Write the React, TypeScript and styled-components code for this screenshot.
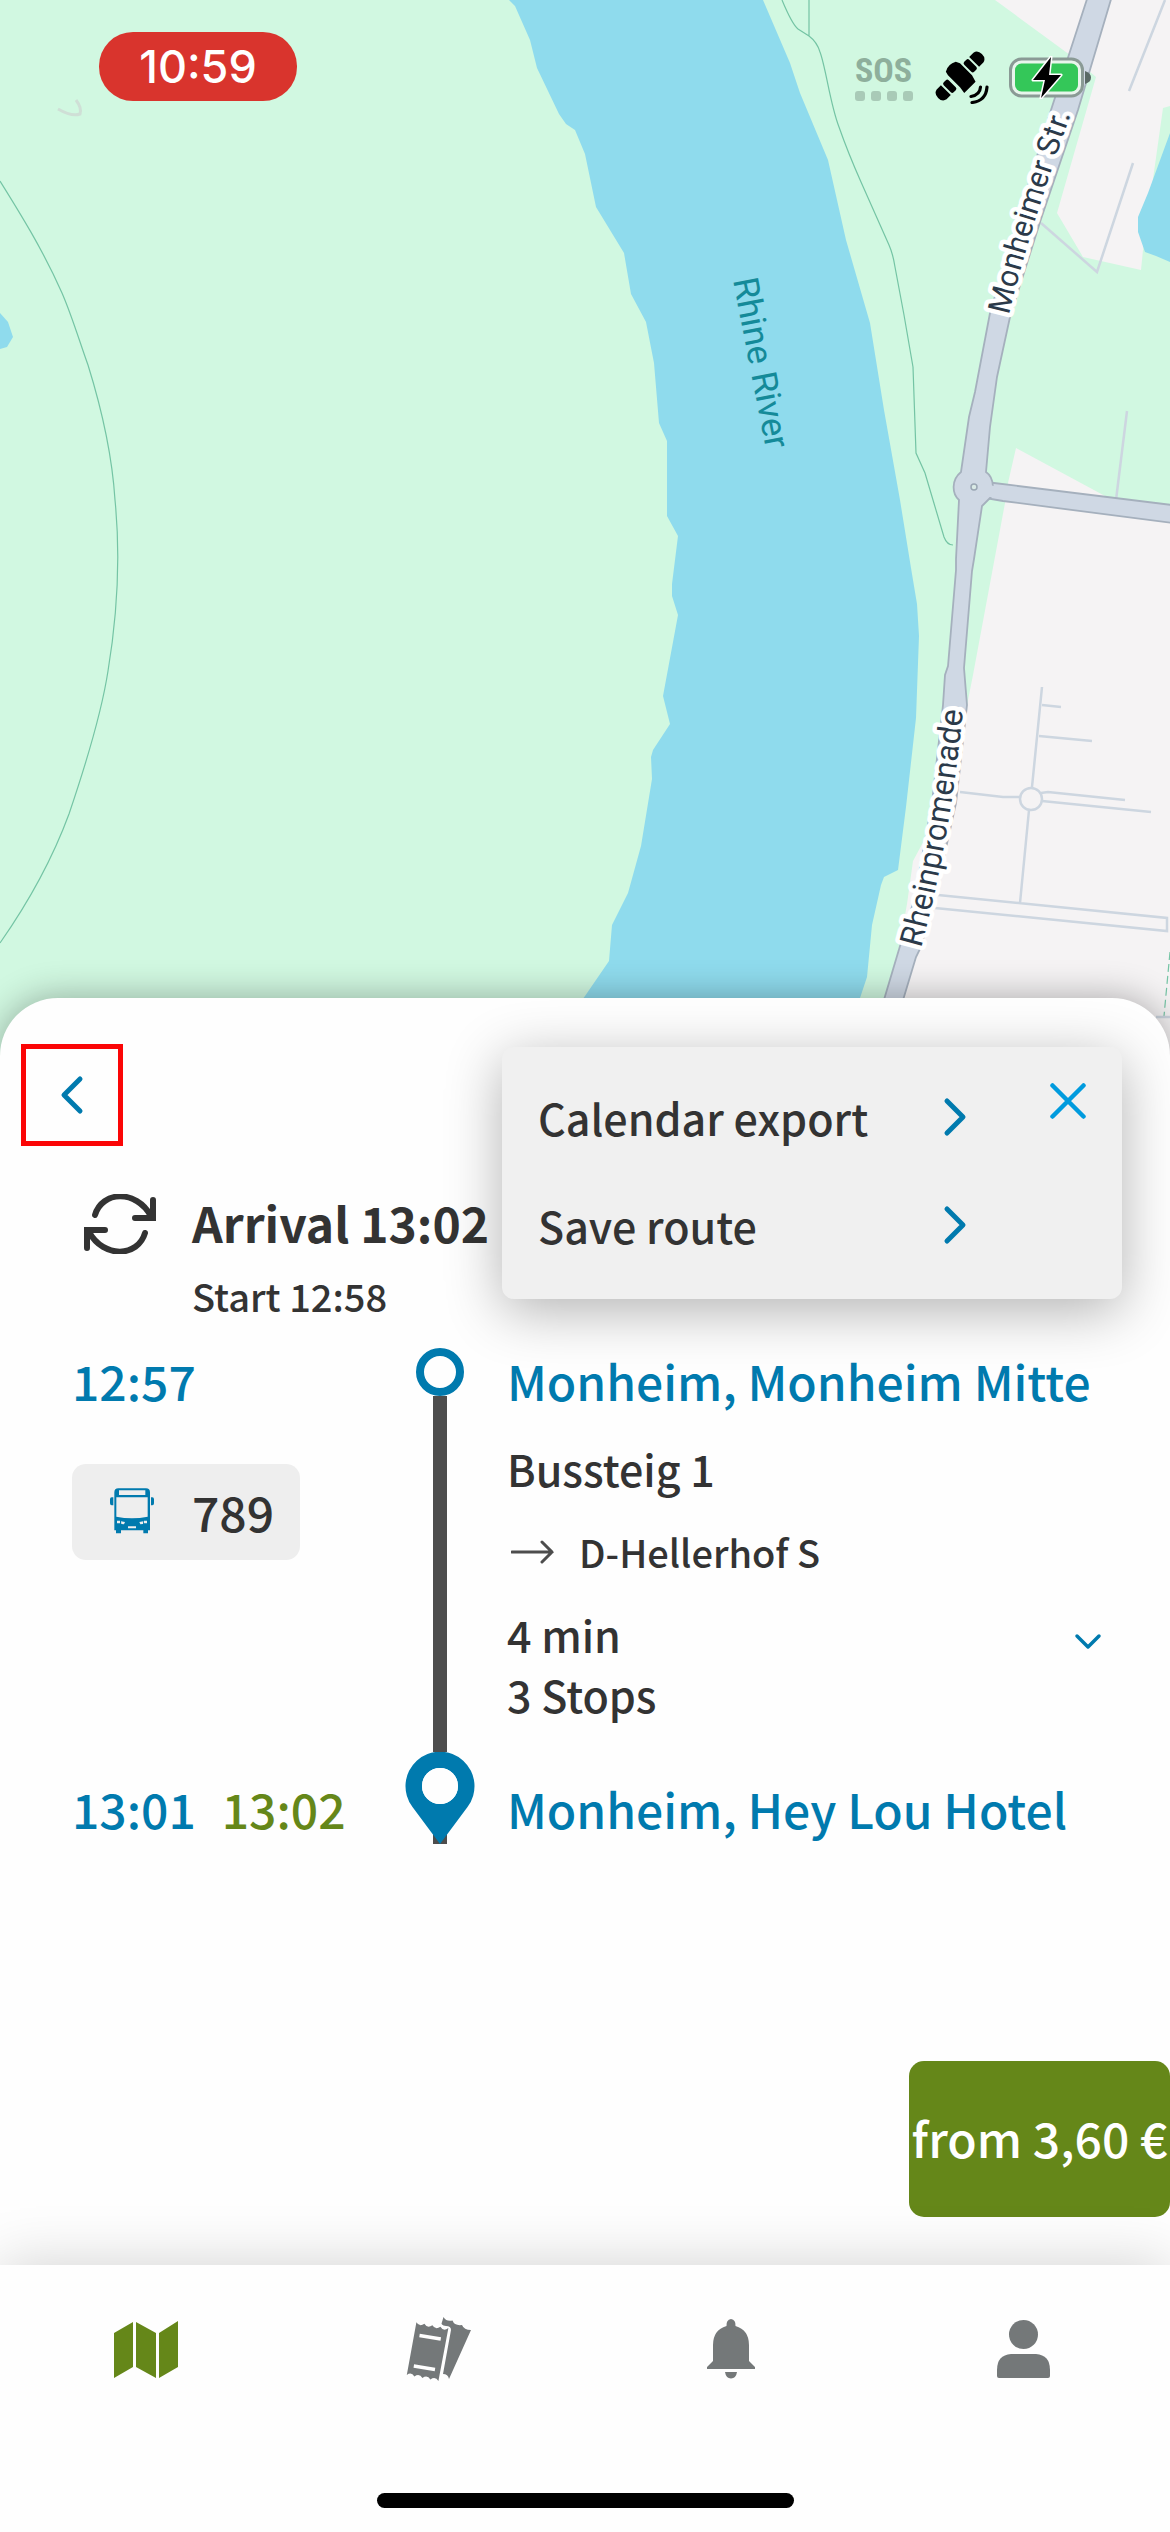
import React from 'react';
import styled, { createGlobalStyle } from 'styled-components';

const colors = {
  ink: '#333333',
  blue: '#007aae',
  sky: '#009bde',
  green: '#658719',
  grey: '#747879',
  panel: '#f0f0f0',
};

const GlobalStyle = createGlobalStyle`
  *, *::before, *::after { box-sizing: border-box; }
  body { margin: 0; background: #fefefe; }
  button { font: inherit; color: inherit; border: 0; padding: 0; background: none; cursor: pointer; }
  p, h1, h2 { margin: 0; font-weight: inherit; }
  svg { display: block; flex: none; }
`;

const Page = styled.div`
  min-height: 100vh;
  display: flex;
  flex-direction: column;
  color: ${colors.ink};
  font-family: 'Noto Sans CJK JP', 'Noto Sans', sans-serif;
  font-weight: 500;
  overflow-x: hidden;
`;

/* ---------- map ---------- */

const MapArea = styled.header`
  position: relative;
  flex: 1 0 700px;
  background: #d1f8e1;
`;

const MapCanvas = styled.svg`
  position: absolute;
  inset: 0;
  width: 100%;
  height: 100%;
`;

const MapLabel = styled.text`
  font-family: Roboto, 'Liberation Sans', sans-serif;
  font-size: ${(p: { $size: number }) => p.$size}px;
  font-weight: 400;
`;

const RoadLabel = styled(MapLabel)`
  fill: #2b3a4a;
  stroke: #ffffff;
  stroke-width: 9px;
  stroke-linejoin: round;
  paint-order: stroke;
`;

const StatusBar = styled.div`
  position: relative;
  display: flex;
  justify-content: space-between;
  align-items: flex-start;
  padding: 32px 79px 0 99px;
`;

const Clock = styled.time`
  display: flex;
  align-items: center;
  justify-content: center;
  width: 198px;
  height: 69px;
  border-radius: 34px;
  background: #d9342d;
  color: #ffffff;
  font-family: Inter, Roboto, sans-serif;
  font-size: 45px;
  font-weight: 500;
`;

const StatusIcons = styled.div`
  display: flex;
  align-items: center;
  gap: 20px;
  padding-top: 18px;
`;

const Sos = styled.div`
  display: flex;
  flex-direction: column;
  align-items: center;
  gap: 4px;
  width: 61px;
  color: #8eaf9c;
  font-family: 'Roboto Condensed', Roboto, sans-serif;
  font-size: 34px;
  line-height: 34px;
  font-weight: 700;
`;

const SosDots = styled.div`
  display: flex;
  gap: 6px;
`;

const SosDot = styled.i`
  width: 10px;
  height: 10px;
  border-radius: 3px;
  background: #a9cab7;
`;

/* ---------- sheet ---------- */

const Sheet = styled.main`
  position: relative;
  display: flex;
  flex-direction: column;
  margin-top: -62px;
  padding: 46px 0 48px;
  border-radius: 58px 58px 0 0;
  background: #fefefe;
  box-shadow: 0 0 36px rgba(0, 0, 0, 0.32);
`;

const BackButton = styled.button`
  display: flex;
  align-items: center;
  justify-content: center;
  width: 102px;
  height: 102px;
  margin-left: 21px;
  && { border: 5px solid #fb0506; }
`;

const Menu = styled.div`
  position: absolute;
  top: 49px;
  right: 48px;
  display: flex;
  align-items: flex-start;
  justify-content: space-between;
  width: 620px;
  padding: 16px 36px 20px;
  border-radius: 12px;
  background: ${colors.panel};
  box-shadow: 0 12px 56px rgba(0, 0, 0, 0.3);
`;

const MenuItems = styled.div`
  display: flex;
  flex-direction: column;
  width: 430px;
`;

const MenuItem = styled.button`
  display: flex;
  align-items: center;
  justify-content: space-between;
  height: 108px;
  font-size: 43px;
  line-height: 64px;
  text-align: left;
`;

const CloseButton = styled.button`
  && { padding-top: 20px; }
`;

const Summary = styled.section`
  display: flex;
  gap: 36px;
  padding: 40px 72px 0 84px;
  svg { margin-top: 8px; }
`;

const Arrival = styled.h1`
  font-size: 48px;
  line-height: 72px;
  font-weight: 700;
`;

const Start = styled.p`
  padding-top: 8px;
  font-size: 38px;
  line-height: 60px;
`;

const Timeline = styled.section`
  display: grid;
  grid-template-columns: 301px 70px 1fr;
  column-gap: 32px;
  padding: 22px 68px 0 72px;
`;

const Times = styled.div`
  display: flex;
  flex-direction: column;
  justify-content: space-between;
  padding-bottom: 4px;
`;

const TimeRow = styled.p`
  display: flex;
  gap: 26px;
  color: ${colors.blue};
  font-size: 48px;
  line-height: 64px;
`;

const LiveTime = styled.span`
  color: ${colors.green};
`;

const LineBadge = styled.div`
  display: flex;
  align-items: center;
  justify-content: space-between;
  width: 228px;
  height: 96px;
  margin-top: 52px;
  padding: 0 26px 2px 38px;
  border-radius: 14px;
  background: #eeeeee;
  font-size: 48px;
  line-height: 64px;
`;

const Rail = styled.div`
  display: flex;
  flex-direction: column;
  align-items: center;
`;

const RailStart = styled.i`
  width: 48px;
  height: 48px;
  border: 8px solid ${colors.blue};
  border-radius: 50%;
`;

const RailLine = styled.i`
  flex: 1;
  width: 14px;
  background: #4d4d4d;
`;

const Details = styled.div`
  display: flex;
  flex-direction: column;
  padding-bottom: 4px;
`;

const StopName = styled.h2`
  color: ${colors.blue};
  font-size: 48px;
  line-height: 64px;
  white-space: nowrap;
`;

const Platform = styled.p`
  margin-top: 24px;
  font-size: 43px;
  line-height: 64px;
`;

const Direction = styled.p`
  display: flex;
  align-items: center;
  gap: 24px;
  margin-top: 24px;
  padding-left: 4px;
  font-size: 38px;
  line-height: 56px;
`;

const StopsToggle = styled.button`
  display: flex;
  align-items: flex-start;
  justify-content: space-between;
  && { margin: 24px 0 52px; }
  font-size: 43px;
  line-height: 60px;
  text-align: left;
  svg { margin-top: 28px; }
`;

const StopsText = styled.span`
  display: flex;
  flex-direction: column;
`;

const PriceButton = styled.button`
  align-self: flex-end;
  min-width: 261px;
  height: 156px;
  margin-top: 217px;
  border-radius: 15px;
  && { padding-bottom: 4px; background: ${colors.green}; color: #ffffff; }
  font-size: 48px;
  line-height: 64px;
  white-space: nowrap;
`;

/* ---------- bottom navigation ---------- */

const BottomBar = styled.footer`
  position: relative;
  display: flex;
  flex-direction: column;
  align-items: center;
  padding: 36px 0 24px;
  background: #fefefe;
  box-shadow: 0 0 56px rgba(0, 0, 0, 0.18);
`;

const Tabs = styled.nav`
  display: grid;
  grid-template-columns: repeat(4, 1fr);
  width: 100%;
`;

const Tab = styled.button<{ $active?: boolean }>`
  display: flex;
  align-items: center;
  justify-content: center;
  height: 96px;
  && { color: ${(p) => (p.$active ? colors.green : colors.grey)}; }
`;

const HomeIndicator = styled.div`
  width: 417px;
  height: 15px;
  margin-top: 96px;
  border-radius: 8px;
  background: #000000;
`;

/* ---------- drawings ---------- */

const CityMap = () => (
  <MapCanvas viewBox="0 0 1170 1060" preserveAspectRatio="xMidYMin slice" role="img" aria-label="Map">
    <rect width="1170" height="1060" fill="#d1f8e1" />
    <g fill="#f5f3f4">
      <path d="M995 0L1070 55L1096 77L1057 213L1083 257L1141 270L1143 250L1163 108L1170 106V0Z" />
      <path d="M1016 448L1105 496L1170 520V1060H870L900 943L907 904L913 861L935 820L950 740L967 705L973 675L1005 503L1008 483Z" />
    </g>
    <g fill="#8fdbed">
      <path d="M509 0L515 6L530 40L537 68L559 114L566 124L575 130L585 154L596 207L624 253L631 294L646 322L654 363L659 423L667 441V516L678 536L672 584V596L678 615L663 696L670 724L653 750L651 757L652 779L641 846L628 893L612 925L609 961L585 996L560 1030H850L860 998L867 977L872 925L881 885L884 877L898 870L906 807L916 718L919 636L917 604L911 568L900 500L884 410L870 323L846 240L828 160L800 93L790 63L763 0Z" />
      <path d="M0 313L8 322L13 337L7 347L0 349Z" />
      <path d="M1170 133L1148 193L1138 217V232L1145 252L1156 256L1170 262Z" />
    </g>
    <g fill="none" stroke="#74c4a4" strokeWidth="1.2">
      <path d="M0 181C20 213 43 250 62 293C72 316 80 343 88 365C102 410 112 453 115 500Q123 580 108 671C102 710 88 758 69 814C55 852 35 893 0 943" />
      <path d="M782 0Q792 24 798 29L809 36Q817 42 820 52C826 68 830 104 839 127C846 147 853 164 861 182L889 245Q893 254 895 267L904 315L913 367L916 453L925 473L933 500L944 537Q947 545 953 545M809 0V36" />
      <path d="M1170 952L1164 1016" strokeDasharray="8 4" />
    </g>
    <path d="M58 109Q72 117 80 114Q82 108 76 100" fill="none" stroke="#cfdfd6" strokeWidth="3" />
    <g fill="none" stroke="#cdd6e0" strokeWidth="2.5">
      <path d="M1165 0L1129 91M1133 163L1097 272L1041 223M1127 411L1116 500" />
      <path d="M1042 687L1032 787M1042 705L1061 707M1039 736L1092 741M960 792L1003 797H1020M1041 793L1048 792L1125 800M1042 801L1151 812M1029 810L1020 903M938 895L1167 918V931L935 908M1156 1017H1170" />
      <circle cx="1031" cy="799" r="11" />
    </g>
    <g fill="#cfd8e4" stroke="#a5b0bd" strokeWidth="1.8">
      <path d="M985 482L994 483L1180 506V524L1003 501L985 498Z" />
      <path d="M1088 -4L1051 110L1018 219L990 313L975 392L969 417L961 472C951 480 952 494 959 500L956 559V570L948 666L945 675L943 705L932 803L914 900L900 946L875 1030H894L916 957L920 949L932 911L956 803L967 705L964 668L972 571L974 559L982 506L990 498C994 494 995 478 986 472L990 427L997 377L1010 317L1041 219L1078 110L1112 -4Z" />
    </g>
    <path d="M980 484L1010 488V499L980 496Z" fill="#cfd8e4" />
    <circle cx="974" cy="487" r="3" fill="#d9e9e5" stroke="#9aa6b3" strokeWidth="1.5" />
    <path id="monheimer" d="M1009 315Q1029 229 1077 97" fill="none" />
    <path id="promenade" d="M921 948Q951 840 965 690" fill="none" />
    <MapLabel $size={35} fill="#148a99" transform="translate(733 280) rotate(79)">Rhine River</MapLabel>
    <RoadLabel $size={31}>
      <textPath href="#monheimer">Monheimer Str.</textPath>
    </RoadLabel>
    <RoadLabel $size={32}>
      <textPath href="#promenade">Rheinpromenade</textPath>
    </RoadLabel>
  </MapCanvas>
);

const SatelliteIcon = () => (
  <svg width="55" height="54" viewBox="933 50 55 54" aria-label="Satellite">
    <g transform="translate(959 76) rotate(-45)">
      <path d="M-7 -13Q0 -17 7 -13L9 -9V8L7 15H-9L-8 8V-9Z" />
      <rect x="11" y="-7" width="7" height="14" rx="2" />
      <path d="M20 -7H26Q31 -6 31 0Q31 6 26 7H20Z" />
      <rect x="-18" y="-7" width="7" height="14" rx="2" />
      <path d="M-20 -7H-26Q-31 -6 -31 0Q-31 6 -26 7H-20Z" />
    </g>
    <path d="M979.500 87Q979 95 970 96.500M986 87Q985 101 971 102.500" fill="none" stroke="#000" strokeWidth="3.200" strokeLinecap="round" />
  </svg>
);

const BatteryIcon = () => (
  <svg width="82" height="43" viewBox="0 0 82 43" aria-label="Battery charging">
    <rect x="1.500" y="3" width="72" height="37" rx="11" fill="#e8f5ec" stroke="#8a9a95" strokeWidth="3" />
    <rect x="6" y="7.500" width="63" height="28" rx="6.500" fill="#34c759" />
    <path d="M76 15Q82 17 82 21.500Q82 26 76 28Z" fill="#5a6a66" />
    <path d="M42 1L24 24H36L32 42L52 19H40Z" fill="#000" stroke="#fff" strokeWidth="3" strokeLinejoin="round" paintOrder="stroke" />
  </svg>
);

const Chevron = ({ flip, color = colors.blue }: { flip?: boolean; color?: string }) => (
  <svg width="26" height="40" viewBox="0 0 26 40" aria-hidden="true">
    <path
      d={flip ? 'M21 4L5 20L21 36' : 'M5 4L21 20L5 36'}
      fill="none"
      stroke={color}
      strokeWidth="5"
      strokeLinecap="round"
      strokeLinejoin="round"
    />
  </svg>
);

const CloseIcon = () => (
  <svg width="36" height="36" viewBox="0 0 36 36" aria-hidden="true">
    <path d="M2.500 2.500L33.500 33.500M33.500 2.500L2.500 33.500" stroke={colors.sky} strokeWidth="4.500" strokeLinecap="round" />
  </svg>
);

const RefreshIcon = () => (
  <svg width="72" height="60" viewBox="84 1195 72 60" aria-hidden="true">
    <path
      d="M95 1216C102 1192 136 1190 151 1217M153 1201V1219H135M145 1234C138 1258 104 1260 89 1233M87 1249V1231H105"
      fill="none"
      stroke={colors.ink}
      strokeWidth="6"
      strokeLinecap="round"
    />
  </svg>
);

const BusIcon = () => (
  <svg width="44" height="46" viewBox="330 266 132 138" aria-label="Bus">
    <path
      fill={colors.blue}
      fillRule="evenodd"
      d="M355 267H438Q450 267 450 279V393H444V402H430V393H363V402H348V393H343V279Q343 267 355 267ZM357 273V287H436V273ZM349 294V352Q396 362 443 352V294ZM351 364V372H360V364ZM363 366L375 368L372 375L364 374ZM432 364V372H441V364ZM430 366L418 368L421 375L429 374ZM384 381V387H408V381Z"
    />
    <path fill={colors.blue} d="M340 294V318H335Q330 318 330 312V300Q330 294 335 294ZM453 294V318H457Q462 318 462 312V300Q462 294 457 294Z" />
  </svg>
);

const PinIcon = () => (
  <svg width="70" height="92" viewBox="0 0 70 92" aria-hidden="true">
    <rect x="28" y="80" width="14" height="12" fill="#4d4d4d" />
    <path
      fill={colors.blue}
      fillRule="evenodd"
      d="M35 92L7.500 55A34.500 34.500 0 1 1 62.500 55ZM35 16A18 18 0 1 0 35 52A18 18 0 1 0 35 16Z"
    />
    <circle cx="35" cy="34" r="18" fill="#fefefe" />
  </svg>
);

const ArrowIcon = () => (
  <svg width="44" height="24" viewBox="0 0 44 24" aria-hidden="true">
    <path d="M1 12H41M31 2L41 12L31 22" fill="none" stroke="#4d4d4d" strokeWidth="3" strokeLinecap="round" />
  </svg>
);

const ExpandIcon = () => (
  <svg width="28" height="20" viewBox="0 0 28 20" aria-hidden="true">
    <path d="M3 4L14 15L25 4" fill="none" stroke={colors.blue} strokeWidth="3.500" strokeLinecap="round" strokeLinejoin="round" />
  </svg>
);

const MapIcon = () => (
  <svg width="64" height="57" viewBox="0 0 64 57" fill="currentColor" aria-hidden="true">
    <path d="M0 12L19 1V46L0 57ZM22 1L42 12V57L22 46ZM45 12L64 0V46L45 57Z" />
  </svg>
);

const TicketsIcon = () => (
  <svg width="66" height="66" viewBox="6 6 66 66" fill="currentColor" aria-hidden="true">
    <path d="M43.500 7q3 5 9 3.500q2 5.500 9.500 4.500q2 5 9 5L49 69q-1 -5 -6 -5L51 20q0 -4 -5 -4q-6 -1 -4 -4z" />
    <path d="M16.400 12.300q3 5 8 1.500q3 5 8 1.500q3 5 8 1.500q3 5 8 1.200L38.400 71q-3 -5 -8 -1.500q-3 -5 -8 -1.500q-3 -5 -8 -1.500q-3 -5 -7.600 -1.500z" />
    <path d="M19.500 25.500L40.800 29M13.800 56L35 59.500" stroke="#fefefe" strokeWidth="3.400" />
  </svg>
);

const BellIcon = () => (
  <svg width="48" height="60" viewBox="0 0 48 60" fill="currentColor" aria-hidden="true">
    <path d="M24 0Q29 1 28.500 7Q42 11 42 26V42L48 48V50H0V48L6 42V26Q6 11 19.500 7Q19 1 24 0ZM18 53H30Q29 59.500 24 59.500Q19 59.500 18 53Z" />
  </svg>
);

const PersonIcon = () => (
  <svg width="53" height="58" viewBox="0 0 53 58" fill="currentColor" aria-hidden="true">
    <circle cx="26.500" cy="14.500" r="14.500" />
    <path d="M14 34H39Q53 35 53 50V56Q53 58 51 58H2Q0 58 0 56V50Q0 35 14 34Z" />
  </svg>
);

/* ---------- screen ---------- */

const menuEntries = ['Calendar export', 'Save route'];

const tabs = [
  { name: 'Map', icon: <MapIcon />, active: true },
  { name: 'Tickets', icon: <TicketsIcon /> },
  { name: 'Alerts', icon: <BellIcon /> },
  { name: 'Profile', icon: <PersonIcon /> },
];

export default function App() {
  return (
    <>
      <GlobalStyle />
      <Page>
        <MapArea>
          <CityMap />
          <StatusBar>
            <Clock>10:59</Clock>
            <StatusIcons>
              <Sos>
                SOS
                <SosDots>
                  {[0, 1, 2, 3].map((n) => (
                    <SosDot key={n} />
                  ))}
                </SosDots>
              </Sos>
              <SatelliteIcon />
              <BatteryIcon />
            </StatusIcons>
          </StatusBar>
        </MapArea>

        <Sheet>
          <BackButton type="button" aria-label="Back">
            <Chevron flip />
          </BackButton>

          <Summary>
            <RefreshIcon />
            <div>
              <Arrival>Arrival 13:02</Arrival>
              <Start>Start 12:58</Start>
            </div>
          </Summary>

          <Timeline>
            <Times>
              <div>
                <TimeRow>12:57</TimeRow>
                <LineBadge>
                  <BusIcon />
                  789
                </LineBadge>
              </div>
              <TimeRow>
                13:01 <LiveTime>13:02</LiveTime>
              </TimeRow>
            </Times>
            <Rail>
              <RailStart />
              <RailLine />
              <PinIcon />
            </Rail>
            <Details>
              <StopName>Monheim, Monheim Mitte</StopName>
              <Platform>Bussteig 1</Platform>
              <Direction>
                <ArrowIcon />
                D-Hellerhof S
              </Direction>
              <StopsToggle type="button">
                <StopsText>
                  <span>4 min</span>
                  <span>3 Stops</span>
                </StopsText>
                <ExpandIcon />
              </StopsToggle>
              <StopName>Monheim, Hey Lou Hotel</StopName>
            </Details>
          </Timeline>

          <PriceButton type="button">from 3,60 €</PriceButton>

          <Menu>
            <MenuItems>
              {menuEntries.map((entry) => (
                <MenuItem key={entry} type="button">
                  {entry}
                  <Chevron />
                </MenuItem>
              ))}
            </MenuItems>
            <CloseButton type="button" aria-label="Close menu">
              <CloseIcon />
            </CloseButton>
          </Menu>
        </Sheet>

        <BottomBar>
          <Tabs>
            {tabs.map((tab) => (
              <Tab key={tab.name} type="button" aria-label={tab.name} $active={tab.active}>
                {tab.icon}
              </Tab>
            ))}
          </Tabs>
          <HomeIndicator />
        </BottomBar>
      </Page>
    </>
  );
}
